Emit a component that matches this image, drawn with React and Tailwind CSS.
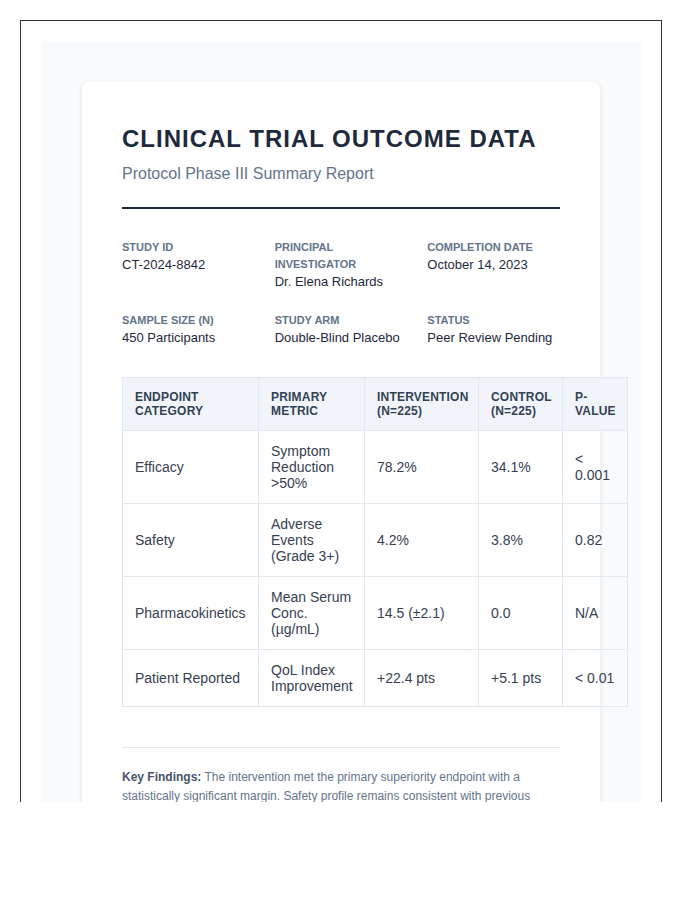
import React from 'react';

const meta = [
  { label: 'Study ID', value: 'CT-2024-8842' },
  { label: 'Principal Investigator', value: 'Dr. Elena Richards' },
  { label: 'Completion Date', value: 'October 14, 2023' },
  { label: 'Sample Size (N)', value: '450 Participants' },
  { label: 'Study Arm', value: 'Double-Blind Placebo' },
  { label: 'Status', value: 'Peer Review Pending' },
];

const rows = [
  ['Efficacy', 'Symptom Reduction >50%', '78.2%', '34.1%', '< 0.001'],
  ['Safety', 'Adverse Events (Grade 3+)', '4.2%', '3.8%', '0.82'],
  ['Pharmacokinetics', 'Mean Serum Conc. (µg/mL)', '14.5 (±2.1)', '0.0', 'N/A'],
  ['Patient Reported', 'QoL Index Improvement', '+22.4 pts', '+5.1 pts', '< 0.01'],
];

const headers = ['Endpoint Category', 'Primary Metric', 'Intervention (N=225)', 'Control (N=225)', 'P-Value'];

export default function App() {
  return (
    <div className="h-[802px] overflow-hidden bg-white px-5 pt-5 font-['Liberation_Sans',Arial,sans-serif]">
      <div className="w-[642px] border border-[#333] p-5">
        <div className="bg-[#f8fafc] p-10">
          <div className="rounded-lg border border-[#f1f5f9] bg-white p-10 shadow-sm">
            <header className="border-b-2 border-[#1e293b] pb-[21px]">
              <h1 className="mb-[9px] pt-[2px] text-[24px] font-bold uppercase leading-[29px] tracking-[1px] text-[#1e293b]">
                Clinical Trial Outcome Data
              </h1>
              <p className="text-[16px] leading-[24px] text-[#64748b]">Protocol Phase III Summary Report</p>
            </header>

            <div className="mt-[30px] grid grid-cols-3 gap-x-5 gap-y-[22px]">
              {meta.map((m) => (
                <div key={m.label}>
                  <div className="text-[11px] font-bold uppercase leading-[17px] text-[#64748b]">{m.label}</div>
                  <div className="text-[13px] leading-[17px] text-[#1e293b]">{m.value}</div>
                </div>
              ))}
            </div>

            <table className="mt-[31px] w-[505px] table-fixed border-collapse">
              <colgroup>
                <col className="w-[136px]" />
                <col className="w-[106px]" />
                <col className="w-[114px]" />
                <col className="w-[84px]" />
                <col className="w-[65px]" />
              </colgroup>
              <thead>
                <tr className="bg-[#f1f5f9]">
                  {headers.map((h) => (
                    <th
                      key={h}
                      className="border border-[#e2e8f0] p-3 text-left align-middle text-[12px] font-bold uppercase leading-[14px] tracking-[0.2px] text-[#334155]"
                    >
                      {h}
                    </th>
                  ))}
                </tr>
              </thead>
              <tbody>
                {rows.map((r) => (
                  <tr key={r[0]}>
                    {r.map((c, i) => (
                      <td
                        key={i}
                        className="border border-[#e2e8f0] p-3 align-middle text-[14px] leading-[16px] text-[#374151]"
                      >
                        {c}
                      </td>
                    ))}
                  </tr>
                ))}
              </tbody>
            </table>

            <div className="mt-10 border-t border-[#e2e8f0] pt-5">
              <p className="text-[12px] leading-[19px] text-[#64748b]">
                <strong className="font-bold text-[#475569]">Key Findings:</strong> The intervention met the primary
                superiority endpoint with a statistically significant margin. Safety profile remains consistent with
                previous phases, and no new safety signals were identified during the observation period.
              </p>
            </div>
          </div>
        </div>
      </div>
    </div>
  );
}
